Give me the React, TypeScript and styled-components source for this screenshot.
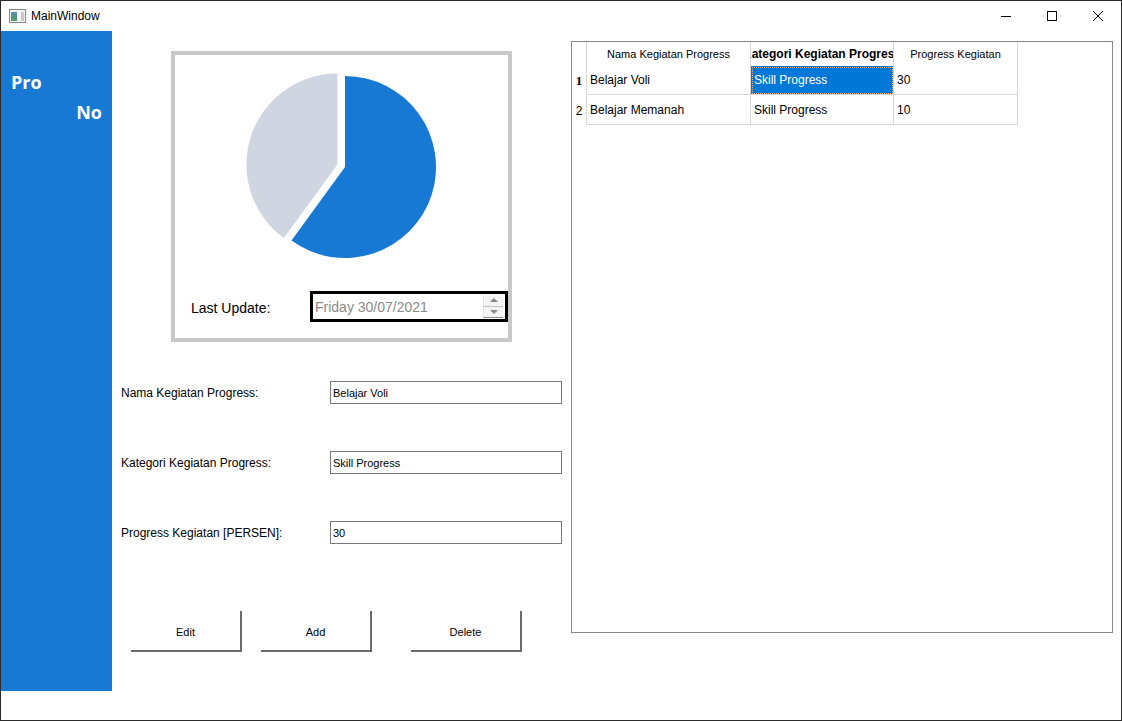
import React from "react";
import styled, { createGlobalStyle } from "styled-components";

const GlobalStyle = createGlobalStyle`
  html, body { margin: 0; padding: 0; background: #fff; }
  body { font-family: "Liberation Sans", Arial, sans-serif; color: #000; }
  * { box-sizing: border-box; }
`;

const Window = styled.div`
  width: 1122px;
  height: 721px;
  border: 1px solid #2b2b2b;
  background: #fff;
  display: flex;
  flex-direction: column;
  overflow: hidden;
`;

const TitleBar = styled.div`
  height: 30px;
  flex-shrink: 0;
  display: flex;
  align-items: center;
`;

const AppIcon = styled.svg`
  margin-left: 8px;
  margin-right: 5px;
  display: block;
`;

const Title = styled.span`
  flex: 1;
  font-size: 12px;
  color: #000;
`;

const CaptionButton = styled.div`
  width: 46px;
  height: 30px;
  display: flex;
  align-items: center;
  justify-content: center;
`;

const Body = styled.div`
  flex: 1;
  display: flex;
  align-items: flex-start;
`;

const Sidebar = styled.div`
  width: 111px;
  height: 660px;
  flex-shrink: 0;
  background: #1779d4;
  display: flex;
  flex-direction: column;
  padding: 39px 10px 0 10px;
`;

const SideText = styled.div<{ $right?: boolean }>`
  color: #fff;
  font-family: "Open Sans", "Liberation Sans", sans-serif;
  font-weight: 700;
  font-size: 18px;
  line-height: 24px;
  align-self: ${(p) => (p.$right ? "flex-end" : "flex-start")};
  margin-top: ${(p) => (p.$right ? "6px" : "0")};
`;

const MiddleColumn = styled.div`
  width: 459px;
  flex-shrink: 0;
  padding-top: 20px;
  display: flex;
  flex-direction: column;
`;

const ChartFrame = styled.div`
  margin-left: 59px;
  width: 341px;
  height: 291px;
  border: 4px solid #c8c8c8;
  display: flex;
  flex-direction: column;
`;

const PieSvg = styled.svg`
  display: block;
`;

const UpdateRow = styled.div`
  display: flex;
  align-items: center;
  margin-top: 16px;
  padding-left: 16px;
`;

const UpdateLabel = styled.span`
  font-size: 14px;
  color: #000;
  padding-top: 2px;
`;

const DateBox = styled.div`
  margin-left: auto;
  width: 198px;
  height: 31px;
  border: 3px solid #000;
  display: flex;
  background: #fff;
`;

const DateText = styled.div`
  flex: 1;
  font-size: 14px;
  line-height: 26px;
  color: #8a8a8a;
  padding-left: 2px;
`;

const Spinner = styled.div`
  width: 20px;
  margin: 1px 2px 1px 0;
  display: flex;
  flex-direction: column;
`;

const SpinButton = styled.div<{ $down?: boolean }>`
  flex: 1;
  display: flex;
  align-items: center;
  justify-content: center;
  background: #f4f4f4;
  border-bottom: 1px solid ${(p) => (p.$down ? "#8c8c8c" : "#c4c4c4")};
  border-left: 1px solid #e4e4e4;
  &::after {
    content: "";
    width: 0;
    height: 0;
    border-left: 4px solid transparent;
    border-right: 4px solid transparent;
    ${(p) => (p.$down ? "border-top: 4px solid #8a8a8a;" : "border-bottom: 4px solid #8a8a8a;")}
  }
`;

const Form = styled.div`
  margin-top: 39px;
  display: flex;
  flex-direction: column;
`;

const FormRow = styled.div`
  display: flex;
  align-items: center;
  height: 23px;
  padding-left: 9px;
  & + & {
    margin-top: 47px;
  }
`;

const FieldLabel = styled.label`
  width: 209px;
  font-size: 12px;
  color: #000;
`;

const FieldInput = styled.input`
  width: 232px;
  height: 23px;
  border: 1px solid #7a7a7a;
  font-family: "Liberation Sans", Arial, sans-serif;
  font-size: 11px;
  color: #000;
  padding: 0 2px;
  outline: none;
  background: #fff;
`;

const ButtonRow = styled.div`
  display: flex;
  margin-top: 67px;
  padding-left: 19px;
`;

const ActionButton = styled.button<{ $gap: number }>`
  width: 111px;
  height: 41px;
  margin-left: ${(p) => p.$gap}px;
  background: #fff;
  border: none;
  border-right: 2px solid #6b6b6b;
  border-bottom: 2px solid #6b6b6b;
  font-family: "Liberation Sans", Arial, sans-serif;
  font-size: 11px;
  color: #000;
  padding: 2px 0 0 0;
`;

const TableFrame = styled.div`
  margin-top: 10px;
  width: 542px;
  height: 592px;
  border: 1px solid #828790;
  background: #fff;
`;

const Grid = styled.div`
  display: grid;
  grid-template-columns: 15px 164px 143px 124px;
  grid-template-rows: 24px 29px 30px;
  width: max-content;
`;

const CornerCell = styled.div`
  border-right: 1px solid #d8d8d8;
`;

const HeaderCell = styled.div<{ $bold?: boolean }>`
  display: flex;
  align-items: center;
  justify-content: center;
  overflow: hidden;
  white-space: nowrap;
  font-size: ${(p) => (p.$bold ? "12px" : "11px")};
  font-weight: ${(p) => (p.$bold ? 700 : 400)};
  border-right: 1px solid #d8d8d8;
`;

const RowHeaderCell = styled.div<{ $bold?: boolean }>`
  display: flex;
  align-items: center;
  justify-content: center;
  font-family: ${(p) => (p.$bold ? '"Liberation Serif", serif' : '"Liberation Sans", Arial, sans-serif')};
  font-size: ${(p) => (p.$bold ? "13px" : "12px")};
  font-weight: ${(p) => (p.$bold ? 700 : 400)};
  border-right: 1px solid #d8d8d8;
  padding-top: 1px;
`;

const DataCell = styled.div<{ $selected?: boolean }>`
  display: flex;
  align-items: center;
  padding-left: 3px;
  font-size: 12px;
  white-space: nowrap;
  overflow: hidden;
  border-right: 1px solid #d8d8d8;
  border-bottom: 1px solid #d8d8d8;
  background: ${(p) => (p.$selected ? "#0078d7" : "#fff")};
  color: ${(p) => (p.$selected ? "#fff" : "#000")};
  ${(p) => (p.$selected ? "outline: 1px dotted #f3b27a; outline-offset: -2px;" : "")}
`;

const rows = [
  { id: "1", nama: "Belajar Voli", kategori: "Skill Progress", progress: "30" },
  { id: "2", nama: "Belajar Memanah", kategori: "Skill Progress", progress: "10" },
];

const fields = [
  { label: "Nama Kegiatan Progress:", value: "Belajar Voli" },
  { label: "Kategori Kegiatan Progress:", value: "Skill Progress" },
  { label: "Progress Kegiatan [PERSEN]:", value: "30" },
];

export default function App() {
  return (
    <>
      <GlobalStyle />
      <Window>
        <TitleBar>
          <AppIcon width="17" height="14" viewBox="0 0 17 14">
            <defs>
              <linearGradient id="ig" x1="0" y1="0" x2="0" y2="1">
                <stop offset="0" stopColor="#5a8fb8" />
                <stop offset="1" stopColor="#4f9a5a" />
              </linearGradient>
            </defs>
            <rect x="0.5" y="0.5" width="16" height="13" fill="#f2f2f2" stroke="#8a8a8a" />
            <rect x="2" y="3" width="6" height="9" fill="url(#ig)" />
            <rect x="9" y="3" width="2" height="9" fill="#ffffff" />
            <rect x="12" y="3" width="3" height="9" fill="#c9c9c9" />
          </AppIcon>
          <Title>MainWindow</Title>
          <CaptionButton>
            <svg width="12" height="12" viewBox="0 0 12 12">
              <line x1="1" y1="6.5" x2="11" y2="6.5" stroke="#000" strokeWidth="1" />
            </svg>
          </CaptionButton>
          <CaptionButton>
            <svg width="12" height="12" viewBox="0 0 12 12">
              <rect x="1.5" y="1.5" width="9" height="9" fill="none" stroke="#000" strokeWidth="1" />
            </svg>
          </CaptionButton>
          <CaptionButton>
            <svg width="12" height="12" viewBox="0 0 12 12">
              <path d="M1 1 L11 11 M11 1 L1 11" stroke="#000" strokeWidth="1" />
            </svg>
          </CaptionButton>
        </TitleBar>
        <Body>
          <Sidebar>
            <SideText>Pro</SideText>
            <SideText $right>No</SideText>
          </Sidebar>
          <MiddleColumn>
            <ChartFrame>
              <PieSvg width="333" height="220" viewBox="0 0 333 220">
                <path d="M170 112 L170 21 A91 91 0 1 1 116.5 185.6 Z" fill="#1779d4" />
                <path
                  d="M170 112 L116.5 185.6 A91 91 0 0 1 170 21 Z"
                  fill="#cfd5e1"
                  transform="translate(-7.6 -2.5)"
                />
              </PieSvg>
              <UpdateRow>
                <UpdateLabel>Last Update:</UpdateLabel>
                <DateBox>
                  <DateText>Friday 30/07/2021</DateText>
                  <Spinner>
                    <SpinButton />
                    <SpinButton $down />
                  </Spinner>
                </DateBox>
              </UpdateRow>
            </ChartFrame>
            <Form>
              {fields.map((f) => (
                <FormRow key={f.label}>
                  <FieldLabel>{f.label}</FieldLabel>
                  <FieldInput readOnly defaultValue={f.value} />
                </FormRow>
              ))}
            </Form>
            <ButtonRow>
              <ActionButton $gap={0}>Edit</ActionButton>
              <ActionButton $gap={19}>Add</ActionButton>
              <ActionButton $gap={39}>Delete</ActionButton>
            </ButtonRow>
          </MiddleColumn>
          <TableFrame>
            <Grid>
              <CornerCell />
              <HeaderCell>Nama Kegiatan Progress</HeaderCell>
              <HeaderCell $bold>Kategori Kegiatan Progress</HeaderCell>
              <HeaderCell>Progress Kegiatan</HeaderCell>
              {rows.map((r, i) => (
                <React.Fragment key={r.id}>
                  <RowHeaderCell $bold={i === 0}>{r.id}</RowHeaderCell>
                  <DataCell>{r.nama}</DataCell>
                  <DataCell $selected={i === 0}>{r.kategori}</DataCell>
                  <DataCell>{r.progress}</DataCell>
                </React.Fragment>
              ))}
            </Grid>
          </TableFrame>
        </Body>
      </Window>
    </>
  );
}
